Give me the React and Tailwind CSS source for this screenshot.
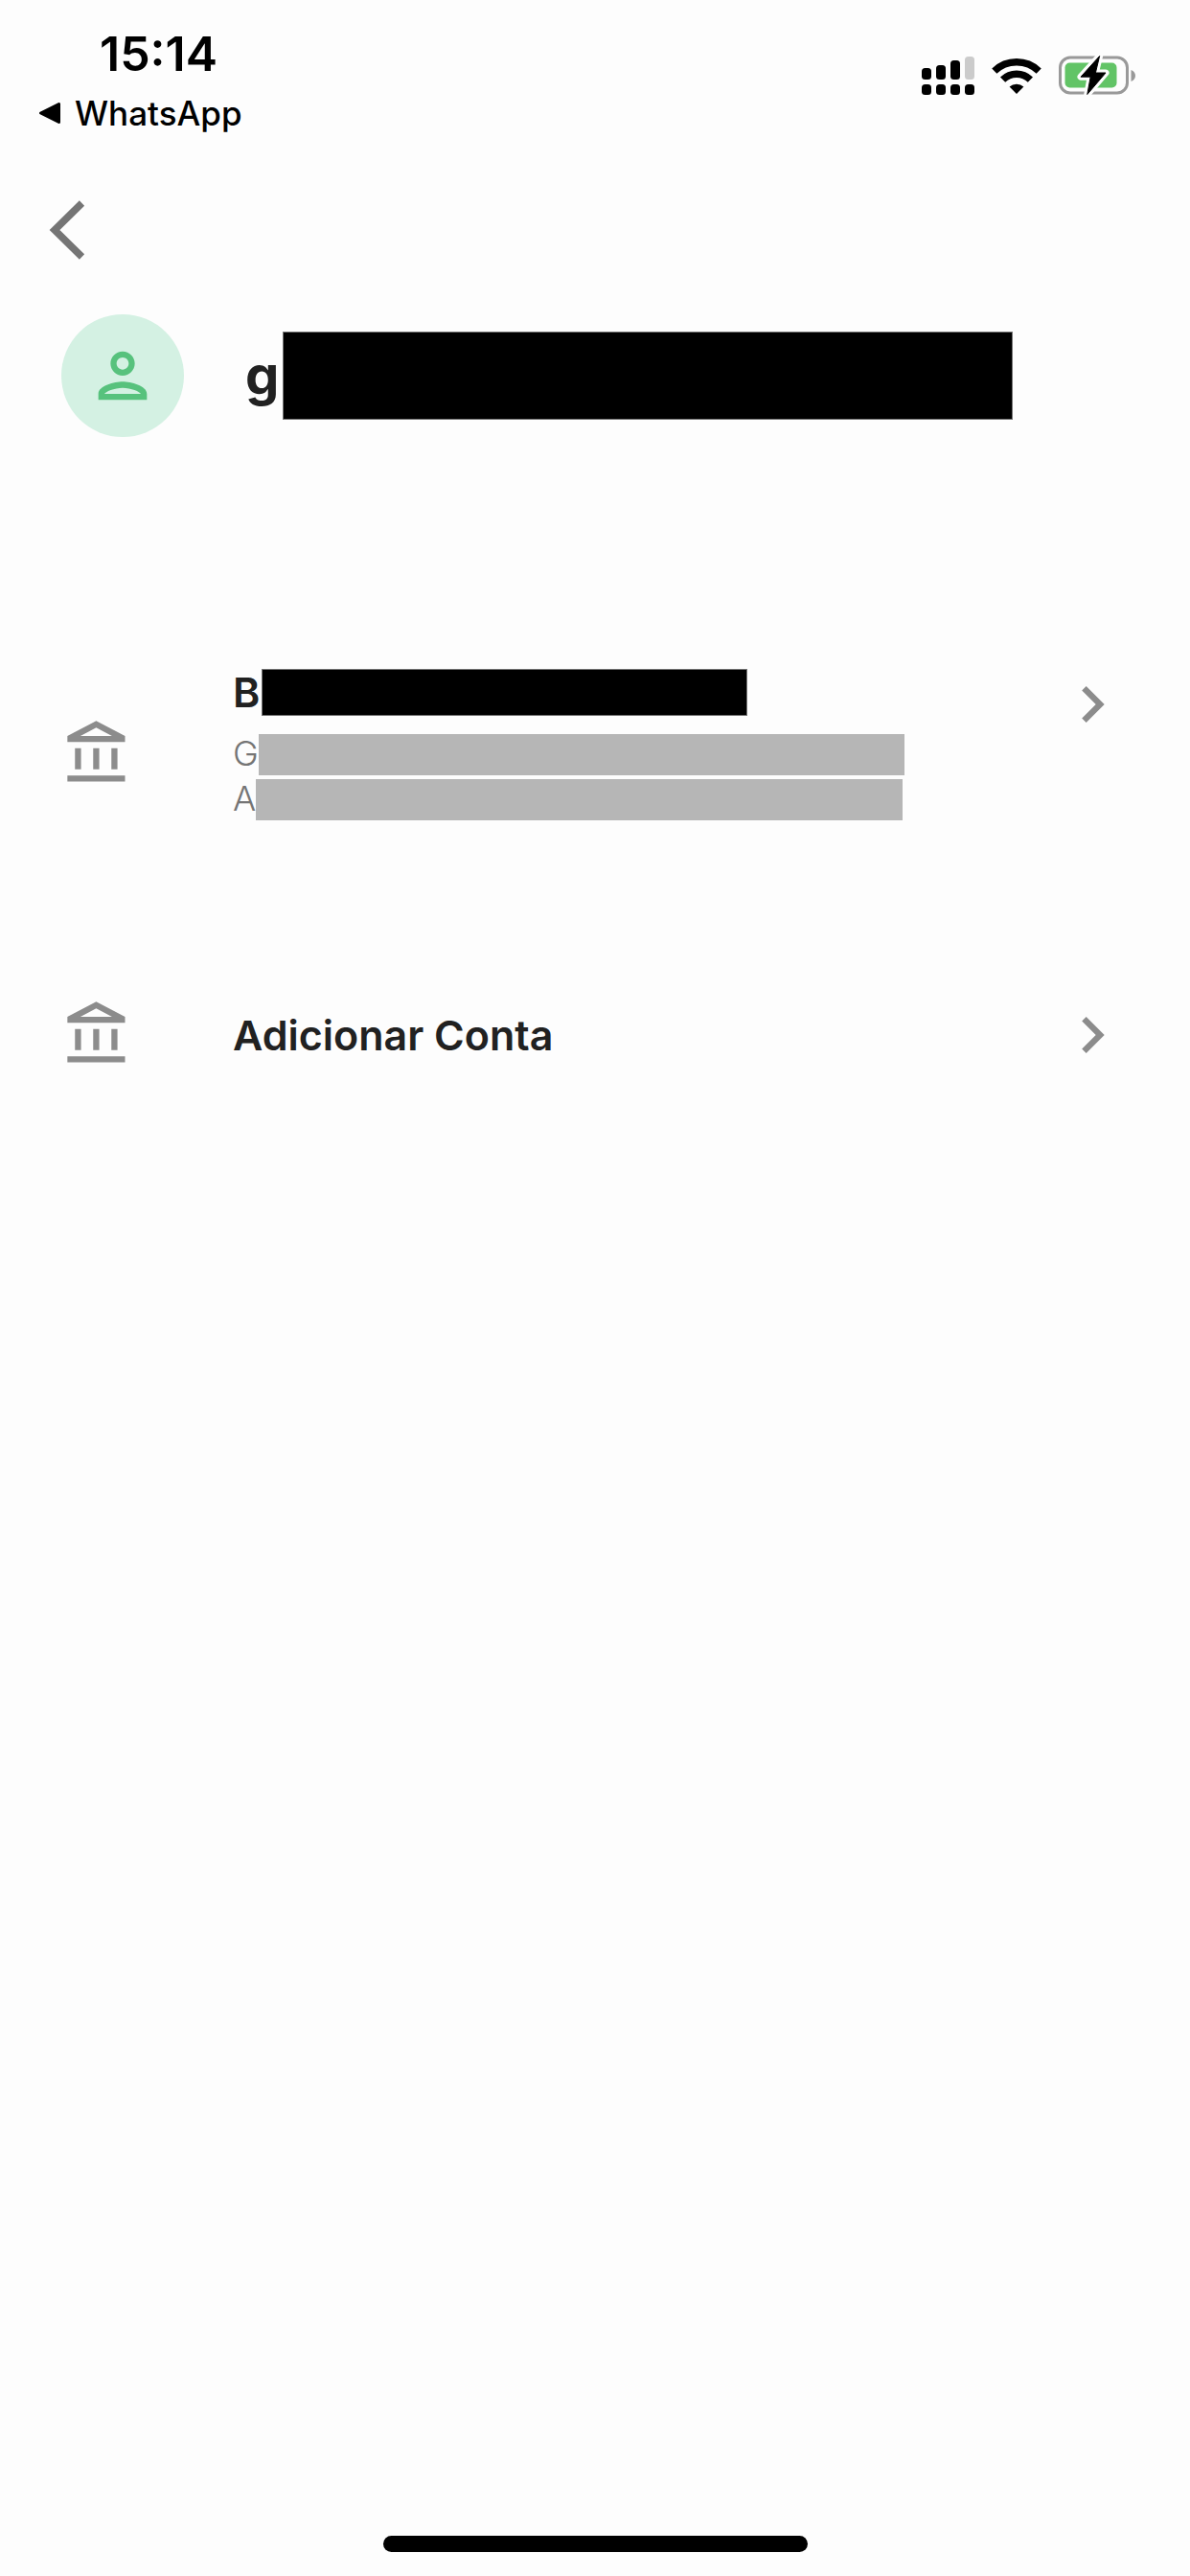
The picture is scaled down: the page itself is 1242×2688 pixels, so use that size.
import { MdChevronRight, MdOutlineAccountBalance, MdOutlinePerson } from 'react-icons/md'

function SignalIcon() {
  const cols = [
    { x: 0, top: 12, color: '#000' },
    { x: 15, top: 9, color: '#000' },
    { x: 30, top: 4, color: '#000' },
    { x: 45, top: 0, color: '#cbcbcb' },
  ]
  return (
    <svg width="55" height="40" viewBox="0 0 55 40" aria-hidden="true">
      {cols.map(c => (
        <g key={c.x}>
          <rect x={c.x} y={c.top} width="10" height={24 - c.top} rx="3.5" fill={c.color} />
          <rect x={c.x} y="29" width="10" height="11" rx="3.5" fill="#000" />
        </g>
      ))}
    </svg>
  )
}

function WifiIcon() {
  return (
    <svg width="52" height="38" viewBox="0 0 52 38" aria-hidden="true">
      <g fill="none" stroke="#000" strokeWidth="7.4">
        <path d="M2.8 14.1A33.5 33.5 0 0 1 49.2 14.1" />
        <path d="M11.6 23.2A20.5 20.5 0 0 1 40.4 23.2" />
      </g>
      <path d="M26 38L18.6 30.6A10.8 10.8 0 0 1 33.4 30.6Z" fill="#000" />
    </svg>
  )
}

function BatteryIcon() {
  const bolt = 'M42.6 0.5L23 22.2H33.2L29.8 40.5L49 18H38.4Z'
  return (
    <svg width="81" height="41" viewBox="0 0 81 41" aria-hidden="true">
      <rect x="1.5" y="2" width="70" height="37" rx="10.5" fill="none" stroke="#999" strokeWidth="3" />
      <rect x="6.5" y="7.5" width="54" height="26" rx="5" fill="#62c466" />
      <path d="M75.5 15C81.5 17 81.5 25 75.5 27Z" fill="#999" />
      <path d={bolt} fill="#000" stroke="#fdfdfd" strokeWidth="7" strokeLinejoin="round" />
      <path d={bolt} fill="#000" stroke="#000" strokeWidth="1" strokeLinejoin="round" />
    </svg>
  )
}

function StatusBar() {
  return (
    <div className="flex justify-between pl-10 pr-14 pt-7 text-black">
      <div>
        <p className="pl-16 text-[50px] leading-[56px] font-semibold">15:14</p>
        <a href="#whatsapp" className="mt-3 flex items-center gap-[14px] text-[35px] leading-[44px] font-medium">
          <svg width="24" height="24" viewBox="0 0 24 24" aria-hidden="true">
            <path d="M2.5 12L21.5 2.5V21.5Z" fill="#000" stroke="#000" strokeWidth="3" strokeLinejoin="round" />
          </svg>
          WhatsApp
        </a>
      </div>
      <div className="flex h-[101px] items-center gap-[18px]">
        <SignalIcon />
        <WifiIcon />
        <BatteryIcon />
      </div>
    </div>
  )
}

export default function App() {
  return (
    <div className="flex min-h-screen flex-col bg-[#fdfdfd] font-['Inter',sans-serif] text-[#212121]">
      <StatusBar />

      <header className="px-12 pt-[52px]">
        <button type="button" aria-label="Voltar" className="block py-4">
          <svg width="42" height="64" viewBox="0 0 42 64" fill="none" aria-hidden="true">
            <path d="M37.5 4L9 32L37.5 60" stroke="#757575" strokeWidth="7.5" />
          </svg>
        </button>
      </header>

      <main>
        <section className="flex items-center px-16 pt-10">
          <div className="flex size-[128px] items-center justify-center rounded-full bg-[#d4f1e3]">
            <MdOutlinePerson size={76} color="#57c27d" />
          </div>
          <h1 className="ml-16 flex items-center gap-1 text-[56px] leading-[64px] font-bold">
            g
            <span className="h-[92px] w-[762px] border border-neutral-500 bg-black" />
          </h1>
        </section>

        <ul className="pt-[241px]">
          <li>
            <button type="button" aria-label="Conta" className="flex w-full items-start px-16 text-left">
              <MdOutlineAccountBalance size={76} color="#8c8c8c" className="mt-[52px]" />
              <span className="ml-[103px] flex flex-1 flex-col">
                <span className="flex items-center gap-0.5 text-[43px] leading-[50px] font-semibold">
                  B
                  <span className="h-[49px] w-[507px] border border-neutral-500 bg-black" />
                </span>
                <span className="mt-[19px] flex items-start text-[36px] leading-[40px] font-light text-[#757575]">
                  G
                  <span className="h-[43px] w-[674px] bg-[#b6b6b6]" />
                </span>
                <span className="mt-1 flex items-start text-[36px] leading-[40px] font-light text-[#757575]">
                  A
                  <span className="h-[43px] w-[675px] bg-[#b6b6b6]" />
                </span>
              </span>
              <MdChevronRight size={76} color="#8c8c8c" />
            </button>
          </li>
          <li className="pt-[186px]">
            <button type="button" className="flex w-full items-center px-16 text-left">
              <MdOutlineAccountBalance size={76} color="#8c8c8c" />
              <span className="ml-[103px] flex-1 text-[43px] leading-[50px] font-semibold">Adicionar Conta</span>
              <MdChevronRight size={76} color="#8c8c8c" />
            </button>
          </li>
        </ul>
      </main>

      <div className="mt-auto flex justify-center pb-[25px]">
        <div className="h-[17px] w-[443px] rounded-full bg-black" />
      </div>
    </div>
  )
}
